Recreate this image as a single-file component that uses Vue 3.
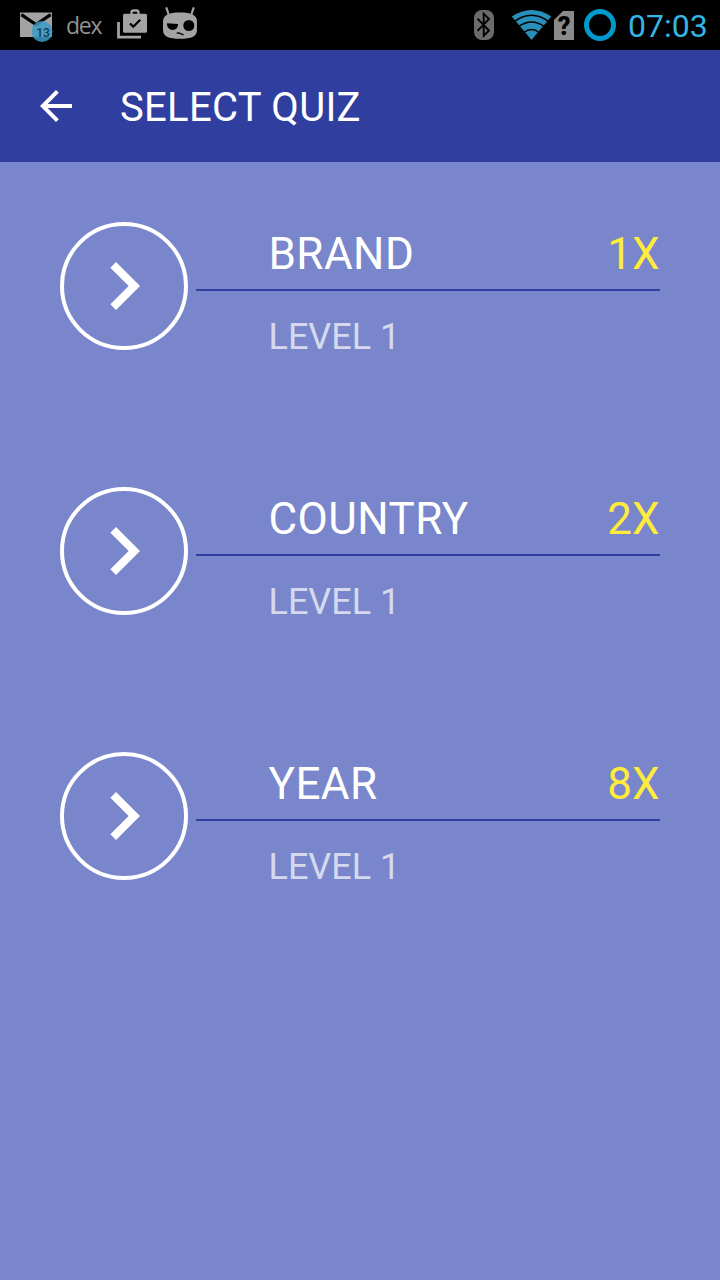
<script setup>
const quizzes = [
  { name: 'BRAND', level: 'LEVEL 1', factor: '1X' },
  { name: 'COUNTRY', level: 'LEVEL 1', factor: '2X' },
  { name: 'YEAR', level: 'LEVEL 1', factor: '8X' },
]
</script>

<template>
  <div class="screen">
    <div class="status">
      <svg class="mail" width="34" height="50" viewBox="19 0 34 50">
        <rect x="20" y="12.500" width="32" height="24.500" fill="#a3a3a3" />
        <path d="M21.300 14.600L36 24.500 50.700 14.600" fill="none" stroke="#000" stroke-width="3.200" />
        <circle cx="42" cy="31.500" r="10.500" fill="#3a9cc4" fill-opacity=".85" />
        <text x="43" y="37" class="count">13</text>
      </svg>
      <span class="dex">dex</span>
      <svg class="bag" width="32" height="50" viewBox="116 0 32 50">
        <path d="M118.500 22v15.200H141" fill="none" stroke="#a3a3a3" stroke-width="2.800" />
        <path d="M131.500 15v-2.500a2 2 0 0 1 2-2h3a2 2 0 0 1 2 2V15" fill="none" stroke="#a3a3a3" stroke-width="2.400" />
        <rect x="123" y="13.700" width="24" height="19" rx="1.500" fill="#a3a3a3" />
        <path d="M130 23.500l3.300 3.200 6.900-7" fill="none" stroke="#000" stroke-width="2.300" />
      </svg>
      <svg class="cid" width="36" height="50" viewBox="162 0 36 50">
        <path d="M168.800 15l-2.300-6.800M191.200 15l2.300-6.800" fill="none" stroke="#a3a3a3" stroke-width="2.200" stroke-linecap="round" />
        <path d="M163 22c0-7 5-9.500 17-9.500s17 2.500 17 9.500v7.500c0 7-5 9.300-17 9.300s-17-2.300-17-9.300z" fill="#a3a3a3" />
        <path d="M167 23.200l11 .8c.4 8-11.500 8-11-.8z" />
        <circle cx="188.800" cy="25.500" r="5.500" />
        <path d="M176.700 33.200l2.200-.2 4.700 1.800" fill="none" stroke="#000" stroke-width="1.300" />
      </svg>
      <svg class="bt" width="22" height="50" viewBox="473 0 22 50">
        <rect x="474" y="10" width="20" height="30" rx="8" fill="#6b6b6b" />
        <path d="M477.500 18.700L489 30.500 483.700 36V13.700L489 19 477.500 30.800" fill="none" stroke="#000" stroke-width="1.900" />
      </svg>
      <svg class="wifi" width="40" height="50" viewBox="511 0 40 50">
        <path d="M531.500 40L511.800 16.500Q531.500 3.500 551.200 16.500z" fill="#278fb9" />
        <path d="M514.500 21.400Q531.500 9 548.500 21.400M518.300 26.800Q531.500 17.200 544.700 26.800M523.500 32.800Q531.500 26.400 539.500 32.800" fill="none" stroke="#000" stroke-width="1.500" />
      </svg>
      <svg class="sim" width="20" height="50" viewBox="554 0 20 50">
        <path d="M554 40V20l9-9h11v29z" fill="#8a8a8a" />
        <text x="564" y="35" class="question">?</text>
      </svg>
      <svg class="ring" width="32" height="50" viewBox="584 0 32 50">
        <circle cx="600" cy="25" r="13.500" fill="none" stroke="#0099cc" stroke-width="5" />
      </svg>
      <span class="clock">07:03</span>
    </div>

    <header class="toolbar">
      <svg width="48" height="48" viewBox="0 0 24 24">
        <path fill="#fff" d="M20 11H7.830l5.590-5.590L12 4l-8 8 8 8 1.410-1.410L7.830 13H20v-2z" />
      </svg>
      <h1>SELECT QUIZ</h1>
    </header>

    <main>
      <section v-for="quiz in quizzes" :key="quiz.name" class="quiz">
        <div class="go">
          <svg width="96" height="96" viewBox="0 0 24 24">
            <path fill="#fff" d="M10 6L8.590 7.410 13.170 12l-4.580 4.590L10 18l6-6z" />
          </svg>
        </div>
        <div class="info">
          <div class="heading">
            <span class="name">{{ quiz.name }}</span>
            <span class="factor">{{ quiz.factor }}</span>
          </div>
          <div class="level">{{ quiz.level }}</div>
        </div>
      </section>
    </main>
  </div>
</template>

<style>
body {
  background: #7986cb;
}
</style>

<style scoped>
.screen {
  height: 1280px;
  overflow: hidden;
  background: #7986cb;
  font-family: Roboto, sans-serif;
  color: #fff;
}
.status {
  display: flex;
  height: 50px;
  background: #000;
  line-height: 50px;
  white-space: nowrap;
}
.status svg {
  flex: none;
}
.mail {
  margin-left: 19px;
}
.count {
  font: 500 12px Roboto, sans-serif;
  text-anchor: middle;
  fill: #12394a;
}
.dex {
  box-sizing: border-box;
  width: 63px;
  padding-left: 13px;
  font: 23px/51px "Open Sans", "Noto Sans", sans-serif;
  letter-spacing: -1.300px;
  color: #929292;
}
.cid {
  margin-left: 14px;
}
.bt {
  margin-left: auto;
}
.wifi {
  margin-left: 16px;
}
.sim {
  margin-left: 3px;
}
.question {
  font: 900 25px Roboto, sans-serif;
  text-anchor: middle;
}
.ring {
  margin-left: 10px;
}
.clock {
  width: 104px;
  padding-left: 12px;
  box-sizing: border-box;
  font-size: 32px;
  line-height: 52px;
  color: #33b5e5;
}
.toolbar {
  display: flex;
  align-items: center;
  gap: 40px;
  height: 112px;
  padding-left: 32px;
  background: #303f9f;
}
h1 {
  margin: 0;
  padding-top: 4px;
  font-size: 40px;
  font-weight: 400;
  line-height: 48px;
  letter-spacing: 0.300px;
}
main {
  display: flex;
  flex-direction: column;
  gap: 137px;
  padding: 60px 60px 0;
}
.quiz {
  display: flex;
  gap: 8px;
  height: 128px;
}
.go {
  display: flex;
  align-items: center;
  justify-content: center;
  flex: none;
  box-sizing: border-box;
  width: 128px;
  height: 128px;
  border: 4px solid #fff;
  border-radius: 50%;
}
.go svg {
  flex: none;
}
.info {
  flex: 1;
}
.heading {
  display: flex;
  justify-content: space-between;
  box-sizing: border-box;
  height: 69px;
  padding: 6px 0 0 72.500px;
  border-bottom: 2px solid #303f9f;
  font-size: 44px;
  line-height: 52px;
}
.name {
  letter-spacing: 0.450px;
}
.factor {
  margin-right: 0.500px;
  color: #ffeb3b;
}
.level {
  padding: 25px 0 0 72.500px;
  font-size: 36px;
  line-height: 42px;
  color: rgba(255, 255, 255, 0.7);
}
</style>
